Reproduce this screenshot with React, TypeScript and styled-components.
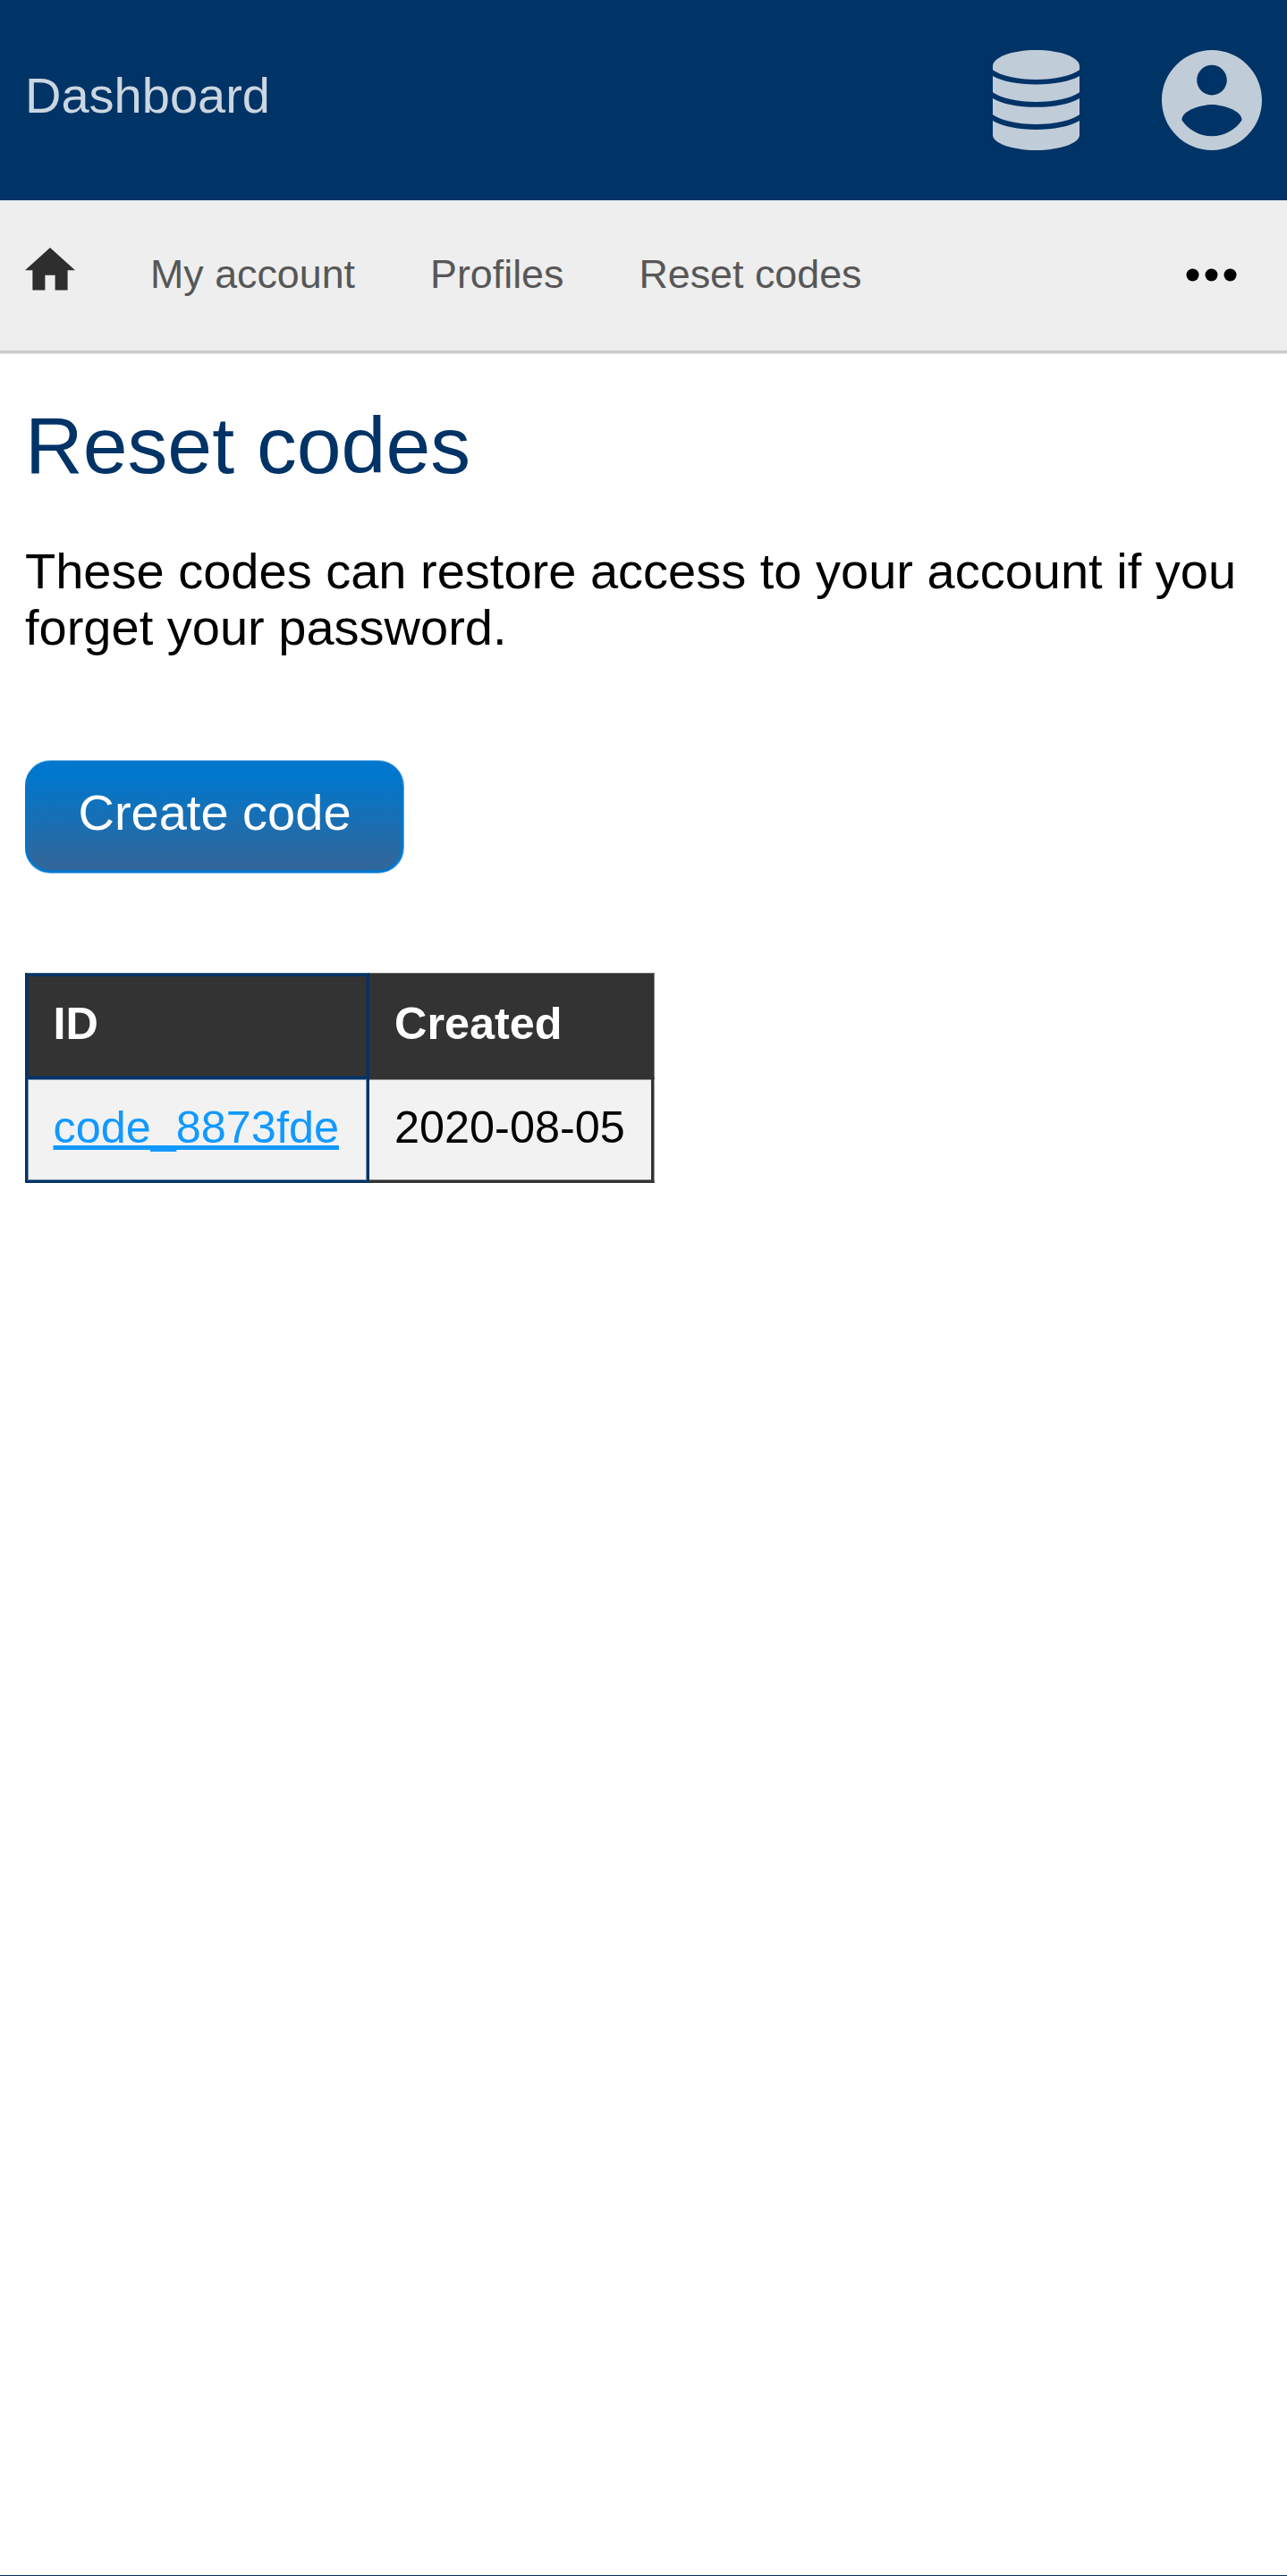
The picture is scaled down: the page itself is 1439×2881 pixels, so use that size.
import React from "react";
import styled, { createGlobalStyle } from "styled-components";

const GlobalStyle = createGlobalStyle`
  *, *::before, *::after { box-sizing: border-box; }
  html, body { margin: 0; padding: 0; background: #fff; }
  body {
    font-family: "Liberation Sans", Arial, Helvetica, sans-serif;
    font-size: 56px;
    line-height: 63px;
    color: #000;
  }
`;

const Page = styled.div`
  display: flex;
  flex-direction: column;
  width: 100%;
  height: 2881px;
  overflow: hidden;
`;

const Header = styled.header`
  display: flex;
  align-items: center;
  justify-content: space-between;
  flex: none;
  height: 224px;
  padding: 0 28px;
  background: #003366;
`;

const Brand = styled.a`
  margin-bottom: 11px;
  color: #ccd6e0;
  text-decoration: none;
`;

const HeaderActions = styled.div`
  display: flex;
  align-items: center;
  gap: 92px;
  color: #c0ccd8;
`;

const Icon = styled.svg<{ $width: number; $height: number }>`
  display: block;
  flex: none;
  width: ${(p) => p.$width}px;
  height: ${(p) => p.$height}px;
  fill: currentColor;
`;

const Nav = styled.nav`
  display: flex;
  align-items: center;
  flex: none;
  gap: 84px;
  height: 172px;
  padding: 0 56px 0 28px;
  background: #eee;
  border-bottom: 1px solid #e5e5e5;
  box-shadow: inset 0 -3px 0 #ccc;
  font-size: 44.8px;
  line-height: 50px;
`;

const HomeLink = styled.a`
  display: flex;
  margin-bottom: 17px;
  color: #2e2e2e;
`;

const NavLink = styled.a`
  margin-bottom: 7px;
  color: #575757;
  text-decoration: none;
  white-space: nowrap;
`;

const MoreButton = styled.button`
  display: flex;
  margin: 0 0 4px auto;
  padding: 0;
  border: 0;
  background: none;
  color: #000;
`;

const Main = styled.main`
  display: flex;
  flex-direction: column;
  align-items: flex-start;
  flex: 1;
  padding: 52px 28px 0;
`;

const Title = styled.h1`
  margin: 0 0 59px;
  color: #003366;
  font-size: 89.6px;
  font-weight: 400;
  line-height: 100px;
`;

const Intro = styled.p`
  margin: 0 0 118px;
`;

const CreateButton = styled.button`
  flex: none;
  width: 423px;
  height: 125px;
  margin: 0 0 112px;
  padding: 0 0 10px 1px;
  border: 3px solid #0077cc;
  border-radius: 28px;
  background: linear-gradient(to bottom, #0077cc 10%, #336699 100%);
  box-shadow: 0 -1px 0 rgba(0, 119, 204, 0.5), 0 1px 0 rgba(0, 119, 204, 0.5),
    1px 0 0 rgba(0, 119, 204, 0.6);
  color: #fff;
  font-family: inherit;
  font-size: 56px;
  line-height: 63px;
`;

const Table = styled.table`
  border-spacing: 0;
  border-collapse: separate;
  table-layout: fixed;
  width: 704px;
  font-size: 50.4px;
  line-height: 57px;
`;

const HeadCell = styled.th<{ $line: string; $edge: string; $width: number }>`
  width: ${(p) => p.$width}px;
  height: 119px;
  padding: 27px 0 31px 28px;
  text-align: left;
  font-weight: 700;
  color: #fff;
  background: #333;
  border: 0 solid ${(p) => p.$line};
  border-width: 1px 3px 3px 0;
  border-top-color: ${(p) => p.$edge};
  box-shadow: inset 0 3px 0 ${(p) => p.$line};

  &:first-child {
    border-left-width: 3px;
    padding-left: 28.5px;
    box-shadow: inset 0 3px 0 ${(p) => p.$line}, inset 0 0 0 1px #1d334a;
  }

  &:last-child {
    border-right: 1px solid #858585;
  }
`;

const BodyCell = styled.td<{ $line: string; $soft: string }>`
  height: 116px;
  padding: 25px 0 31px 28px;
  background: #f2f2f2;
  border: 0 solid ${(p) => p.$line};
  border-width: 0 3px 3px 0;
  box-shadow: inset 0 1px 0 ${(p) => p.$soft}, inset 0 -1px 0 ${(p) => p.$soft};

  &:first-child {
    border-left-width: 3px;
    padding-left: 28.5px;
    box-shadow: inset 0 0 0 1px ${(p) => p.$soft};
  }

  &:last-child {
    border-right: 1px solid #999;
    box-shadow: inset -3px 0 0 ${(p) => p.$line}, inset 0 1px 0 ${(p) => p.$soft},
      inset 0 -1px 0 ${(p) => p.$soft};
  }
`;

const CodeLink = styled.a`
  color: #1199ff;
  text-decoration: underline;
  text-decoration-skip-ink: none;
`;

const Footer = styled.footer`
  flex: none;
  height: 1px;
  background: #003366;
`;

const navItems = ["My account", "Profiles", "Reset codes"];
const codes = [{ id: "code_8873fde", created: "2020-08-05" }];

function DatabaseIcon() {
  return (
    <Icon $width={97} $height={112} viewBox="0 0 291 336" aria-hidden="true">
      <path d="M0 54C0 24 64 0 145.5 0S291 24 291 54V67C263 87 208 99 145.5 99S28 87 0 67Z" />
      <path d="M0 87C32 105 86 115.500 145.500 115.500S259 105 291 87V142C263 162 208 174 145.500 174S28 162 0 142Z" />
      <path d="M0 162C32 181 86 191.500 145.500 191.500S259 181 291 162V217C263 237 208 249 145.500 249S28 237 0 217Z" />
      <path d="M0 237C32 256 86 267 145.500 267S259 256 291 237V285C291 312 226 336 145.500 336S0 312 0 285Z" />
    </Icon>
  );
}

function AccountIcon() {
  return (
    <Icon $width={112} $height={112} viewBox="2 2 20 20" aria-hidden="true">
      <path d="M12 2C6.480 2 2 6.480 2 12s4.480 10 10 10 10-4.480 10-10S17.520 2 12 2zm0 3c1.660 0 3 1.340 3 3s-1.340 3-3 3-3-1.340-3-3 1.340-3 3-3zm0 14.200c-2.500 0-4.710-1.280-6-3.220.03-1.990 4-3.080 6-3.080 1.990 0 5.970 1.090 6 3.080-1.290 1.940-3.500 3.220-6 3.220z" />
    </Icon>
  );
}

function HomeIcon() {
  return (
    <Icon $width={56} $height={48} viewBox="2 3 20 17.143" aria-hidden="true">
      <path d="M10 20v-6h4v6h5v-8h3L12 3 2 12h3v8z" />
    </Icon>
  );
}

function MoreIcon() {
  return (
    <Icon $width={57} $height={15} viewBox="0 0 57 15" aria-hidden="true">
      <circle cx="7.500" cy="7.500" r="7" />
      <circle cx="28.500" cy="7.500" r="7" />
      <circle cx="49.500" cy="7.500" r="7" />
    </Icon>
  );
}

export default function App() {
  return (
    <>
      <GlobalStyle />
      <Page>
        <Header>
          <Brand>Dashboard</Brand>
          <HeaderActions>
            <DatabaseIcon />
            <AccountIcon />
          </HeaderActions>
        </Header>
        <Nav>
          <HomeLink aria-label="Home">
            <HomeIcon />
          </HomeLink>
          {navItems.map((item) => (
            <NavLink key={item}>{item}</NavLink>
          ))}
          <MoreButton aria-label="More">
            <MoreIcon />
          </MoreButton>
        </Nav>
        <Main>
          <Title>Reset codes</Title>
          <Intro>These codes can restore access to your account if you forget your password.</Intro>
          <CreateButton>Create code</CreateButton>
          <Table>
            <thead>
              <tr>
                <HeadCell $line="#003366" $edge="#405f80" $width={385}>ID</HeadCell>
                <HeadCell $line="#333" $edge="#666" $width={319}>Created</HeadCell>
              </tr>
            </thead>
            <tbody>
              {codes.map((code) => (
                <tr key={code.id}>
                  <BodyCell $line="#003366" $soft="#7892ac">
                    <CodeLink>{code.id}</CodeLink>
                  </BodyCell>
                  <BodyCell $line="#333" $soft="#929292">{code.created}</BodyCell>
                </tr>
              ))}
            </tbody>
          </Table>
        </Main>
        <Footer />
      </Page>
    </>
  );
}
